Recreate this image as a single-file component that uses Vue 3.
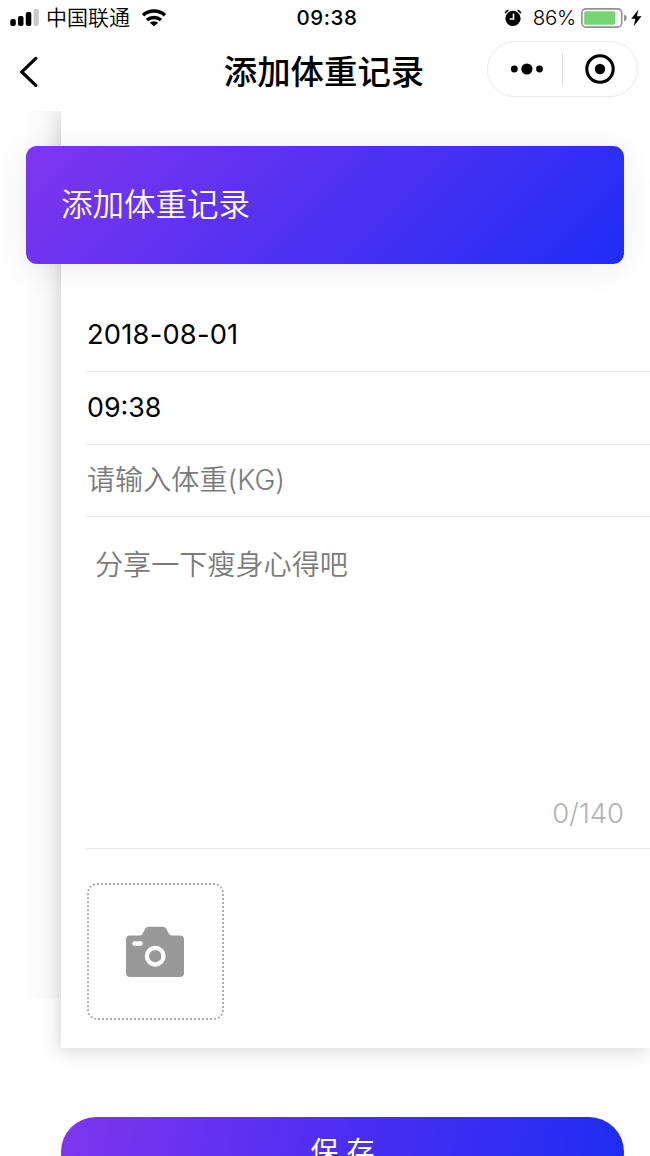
<template>
    <div class="page">
        <!-- Phone status bar -->
        <div class="status-bar">
            <div class="status-bar__left">
                <svg class="signal" width="29" height="18" viewBox="0 0 29 18">
                    <rect x="0.3" y="10" width="5.5" height="7" rx="2" />
                    <rect x="8" y="7" width="5.5" height="10" rx="2" />
                    <rect x="15.8" y="3" width="5.5" height="14" rx="2" />
                    <rect x="23.6" y="0" width="5.2" height="17" rx="2" fill="#c9c9c9" />
                </svg>
                <span class="carrier">中国联通</span>
                <svg class="wifi" width="26" height="18" viewBox="0 0 26 18">
                    <path d="M2 6.2a16.5 16.5 0 0 1 22 0M6 11a10.8 10.8 0 0 1 14 0" fill="none" stroke="#000" stroke-width="3.5" />
                    <path d="M13 17.3l-4.2-3.6a6.4 6.4 0 0 1 8.4 0z" />
                </svg>
            </div>
            <span class="status-bar__time">{{ time }}</span>
            <div class="status-bar__right">
                <svg width="18" height="18" viewBox="0 0 18 18">
                    <circle cx="9" cy="9.4" r="7.6" />
                    <path d="M1.200 4.300A5 5 0 0 1 4.500 1.200M16.800 4.300A5 5 0 0 0 13.500 1.200" fill="none" stroke="#000" stroke-width="1.6" />
                    <path d="M9.500 4.500v5.500H5.700" fill="none" stroke="#fff" stroke-width="1.6" />
                </svg>
                <span class="percent">86%</span>
                <svg width="46" height="20" viewBox="0 0 46 20">
                    <rect x="0.9" y="0.9" width="39.8" height="18.2" rx="4" fill="#fff" stroke="#929292" stroke-width="1.6" />
                    <rect x="3.2" y="3.2" width="31" height="13.6" rx="1.2" fill="#75d671" />
                    <path d="M43.2 6.6q2.5 1 2.5 3.4t-2.5 3.4z" fill="#858585" />
                </svg>
                <svg class="bolt" width="11" height="18" viewBox="0 0 11 18">
                    <path d="M7.2 0.8L0.3 9.7h4L2.8 17.2 10.5 7.3H6z" />
                </svg>
            </div>
        </div>

        <!-- Navigation bar -->
        <div class="nav-bar">
            <svg class="nav-bar__back" width="20" height="32" viewBox="0 0 20 32">
                <path d="M17.800 2.400L3.800 15.900l14 13.500" fill="none" stroke="#000" stroke-width="3.2" stroke-linecap="round" stroke-linejoin="miter" />
            </svg>
            <h1 class="nav-bar__title">{{ title }}</h1>
            <div class="capsule">
                <svg width="34" height="12" viewBox="0 0 34 12">
                    <circle cx="4.3" cy="6" r="3.4" />
                    <circle cx="16.9" cy="6" r="5.6" />
                    <circle cx="29.5" cy="6" r="3.4" />
                </svg>
                <span class="capsule__line"></span>
                <svg width="30" height="30" viewBox="0 0 30 30">
                    <circle cx="15" cy="15" r="13.2" fill="none" stroke="#000" stroke-width="3.1" />
                    <circle cx="15" cy="15" r="5.2" />
                </svg>
            </div>
        </div>

        <div class="content">
            <div class="card">
                <div class="banner">{{ title }}</div>

                <!-- Record form -->
                <div class="form">
                    <div class="form__row form__row--date">{{ date }}</div>
                    <div class="form__row form__row--time">{{ time }}</div>
                    <div class="form__row">
                        <input v-model="weight" type="text" placeholder="请输入体重(KG)" />
                    </div>
                    <div class="form__note">
                        <textarea v-model="note" :maxlength="maxLength" placeholder="分享一下瘦身心得吧"></textarea>
                        <span class="form__count">{{ note.length }}/{{ maxLength }}</span>
                    </div>
                </div>

                <button class="upload" type="button">
                    <svg width="60" height="52" viewBox="0 0 60 52">
                        <path d="M5 9.500h9.500q2.500 0 3.500-2.500l1.500-3Q21 .8 24.500.8h12.500Q40.500.8 42 4l1.500 3q1 2.500 3.500 2.500h8q4 0 4 4V47q0 4-4 4H5q-4 0-4-4V13.500q0-4 4-4z" fill="#999" />
                        <rect x="7.300" y="15.300" width="10.500" height="4.500" rx="2.200" fill="#fff" />
                        <circle cx="30.200" cy="30.200" r="8.300" fill="none" stroke="#fff" stroke-width="4.300" />
                    </svg>
                </button>
            </div>

            <button class="save" type="button">保 存</button>
        </div>
    </div>
</template>

<script setup>
import { ref } from 'vue';

const title = '添加体重记录';
const maxLength = 140;

// Form values
const date = ref('2018-08-01');
const time = ref('09:38');
const weight = ref('');
const note = ref('');
</script>

<style>
body {
    margin: 0;
    overflow: hidden;
}
</style>

<style scoped>
.page {
    display: flex;
    flex-direction: column;
    width: 650px;
    height: 1156px;
    overflow: hidden;
    background: #fefefe;
    color: #000;
    font-family: Inter, "Noto Sans CJK SC", sans-serif;
}

.page * {
    box-sizing: border-box;
}

svg {
    display: block;
    flex: none;
}

.status-bar {
    display: grid;
    grid-template-columns: 1fr auto 1fr;
    align-items: center;
    height: 36px;
    padding: 0 8px 0 10px;
    font-size: 21px;
    line-height: 36px;
}

.status-bar__left,
.status-bar__right {
    display: flex;
    align-items: center;
}

.status-bar__right {
    justify-content: flex-end;
}

.carrier {
    margin-left: 7px;
    font-weight: 350;
}

.wifi {
    margin-left: 11px;
}

.status-bar__time {
    padding-left: 2px;
    font-size: 20.5px;
    font-weight: 500;
    letter-spacing: 0.6px;
}

.percent {
    margin: 0 5px 0 11px;
    font-size: 20.5px;
    font-weight: 350;
    letter-spacing: -0.3px;
}

.bolt {
    margin-left: 4px;
}

.nav-bar {
    display: grid;
    grid-template-columns: 151px 1fr 151px;
    align-items: center;
    flex: none;
    height: 75px;
    padding: 0 12px 9px 18px;
}

.nav-bar__back {
    margin-top: 6px;
}

.nav-bar__title {
    margin: 5px 8px 0 0;
    font-size: 33.4px;
    font-weight: 500;
    line-height: 50px;
    text-align: center;
    white-space: nowrap;
}

.capsule {
    display: flex;
    align-items: center;
    justify-content: space-between;
    height: 56px;
    padding: 0 22px;
    border: 1px solid #ebebeb;
    border-radius: 28px;
    background: #fff;
}

.capsule__line {
    width: 1px;
    height: 32px;
    margin: 0 4px 0 0;
    background: #d9d9d9;
}

.content {
    flex: 1;
    overflow: hidden;
}

.card {
    position: relative;
    width: 589px;
    height: 937px;
    margin-left: 61px;
    padding-top: 35px;
    background: #fff;
    box-shadow: -2px 3px 16px rgba(0, 0, 0, 0.15);
}

/* Soft edge left of the card */
.card::before {
    content: "";
    position: absolute;
    top: 0;
    bottom: 50px;
    left: -34px;
    width: 34px;
    background: linear-gradient(to left, rgba(0, 0, 0, 0.03), rgba(0, 0, 0, 0.005));
}

.banner {
    position: relative;
    width: 598px;
    height: 118px;
    margin-left: -35px;
    padding-left: 35px;
    border-radius: 11px;
    background: linear-gradient(135deg, #8035ee 0%, #1f2df5 100%);
    box-shadow: 0 4px 32px rgba(0, 0, 0, 0.08);
    color: #fff;
    font-size: 31.5px;
    font-weight: 350;
    line-height: 117px;
}

.form {
    margin: 36px 0 0 25px;
    font-size: 28.1px;
}

.form__row {
    height: 72.4px;
    padding-left: 1px;
    border-bottom: 1px solid #e9e9e9;
    line-height: 70px;
}

.form__row--date {
    font-size: 27.3px;
    letter-spacing: 0.2px;
}

.form__row--time {
    font-size: 26.8px;
}

input,
textarea {
    display: block;
    width: 100%;
    padding: 0;
    border: none;
    outline: none;
    background: none;
    font: inherit;
}

input {
    height: 70px;
}

textarea {
    height: 240px;
    padding-left: 9px;
    resize: none;
    line-height: 40px;
}

input::placeholder,
textarea::placeholder {
    color: #7b7b7b;
    font-weight: 350;
    opacity: 1;
}

.form__note {
    display: flex;
    flex-direction: column;
    height: 332px;
    padding-top: 28px;
    border-bottom: 1px solid #e9e9e9;
}

.form__count {
    align-self: flex-end;
    margin-right: 26px;
    color: #b2b2b2;
    font-size: 27.5px;
    font-weight: 350;
    line-height: 56px;
}

.upload {
    display: flex;
    align-items: center;
    justify-content: center;
    width: 137px;
    height: 137px;
    margin: 34px 0 0 25.5px;
    padding: 0;
    border: 2px dotted #aaa;
    border-radius: 10px;
    background: none;
}

.save {
    display: block;
    width: 563px;
    height: 70px;
    margin: 69px 0 0 61px;
    padding: 0;
    border: none;
    border-radius: 35px;
    background: linear-gradient(100deg, #8035ee, #472df3 55%, #1f2df2);
    color: #fff;
    font: inherit;
    font-size: 28px;
    line-height: 66px;
}
</style>
